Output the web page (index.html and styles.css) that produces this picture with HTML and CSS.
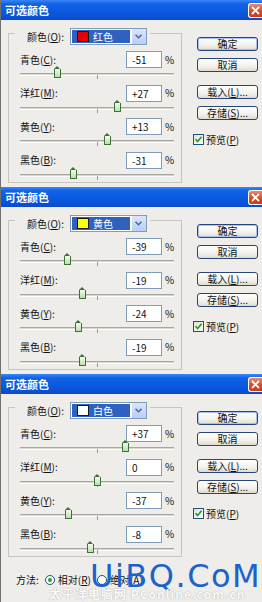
FILE: index.html
```html
<!DOCTYPE html>
<html><head><meta charset="utf-8"><title>可选颜色</title><link rel="stylesheet" href="styles.css"></head>
<body>

<div class="dialog">
  <div class="titlebar"><span class="title">可选颜色</span><span class="close"><svg width="9" height="9" viewBox="0 0 9 9"><path d="M1 1L8 8M8 1L1 8" stroke="#fff" stroke-width="1.8"/></svg></span></div>
  <div class="body">
    <div class="main">
      <div class="group">
        <div class="ghead"><span class="glabel">颜色(<u>O</u>):</span><span class="combo"><span class="sel"><span class="swatch sw-red"></span>红色</span><span class="drop"><svg width="7" height="5" viewBox="0 0 7 5"><path d="M0.5 0.8L3.5 3.8L6.5 0.8" fill="none" stroke="#4d61a8" stroke-width="1.5"/></svg></span></span></div>
        <div class="rows">
          <div class="row"><div class="line"><span class="lbl">青色(<u>C</u>):</span><span class="inp">-51</span><span class="pct">%</span></div><div class="slider"><span class="tick"></span><span class="thumb" style="left:37.7px"></span></div></div>
          <div class="row"><div class="line"><span class="lbl">洋红(<u>M</u>):</span><span class="inp">+27</span><span class="pct">%</span></div><div class="slider"><span class="tick"></span><span class="thumb" style="left:97.8px"></span></div></div>
          <div class="row"><div class="line"><span class="lbl">黄色(<u>Y</u>):</span><span class="inp">+13</span><span class="pct">%</span></div><div class="slider"><span class="tick"></span><span class="thumb" style="left:87px"></span></div></div>
          <div class="row"><div class="line"><span class="lbl">黑色(<u>B</u>):</span><span class="inp">-31</span><span class="pct">%</span></div><div class="slider"><span class="tick"></span><span class="thumb" style="left:53.1px"></span></div></div>
        </div>
      </div>
    </div>
    <div class="side">
      <span class="btn default">确定</span>
      <span class="btn">取消</span>
      <span class="btn gap">载入(<u>L</u>)...</span>
      <span class="btn">存储(<u>S</u>)...</span>
      <span class="check"><span class="cbox"><svg width="9" height="9" viewBox="0 0 9 9"><path d="M1.5 4.2L3.6 6.5L7.6 1.8" fill="none" stroke="#21a121" stroke-width="1.7"/></svg></span>预览(<u>P</u>)</span>
    </div>
  </div>
</div>

<div class="dialog">
  <div class="titlebar"><span class="title">可选颜色</span><span class="close"><svg width="9" height="9" viewBox="0 0 9 9"><path d="M1 1L8 8M8 1L1 8" stroke="#fff" stroke-width="1.8"/></svg></span></div>
  <div class="body">
    <div class="main">
      <div class="group">
        <div class="ghead"><span class="glabel">颜色(<u>O</u>):</span><span class="combo"><span class="sel"><span class="swatch sw-yellow"></span>黄色</span><span class="drop"><svg width="7" height="5" viewBox="0 0 7 5"><path d="M0.5 0.8L3.5 3.8L6.5 0.8" fill="none" stroke="#4d61a8" stroke-width="1.5"/></svg></span></span></div>
        <div class="rows">
          <div class="row"><div class="line"><span class="lbl">青色(<u>C</u>):</span><span class="inp">-39</span><span class="pct">%</span></div><div class="slider"><span class="tick"></span><span class="thumb" style="left:47px"></span></div></div>
          <div class="row"><div class="line"><span class="lbl">洋红(<u>M</u>):</span><span class="inp">-19</span><span class="pct">%</span></div><div class="slider"><span class="tick"></span><span class="thumb" style="left:62.4px"></span></div></div>
          <div class="row"><div class="line"><span class="lbl">黄色(<u>Y</u>):</span><span class="inp">-24</span><span class="pct">%</span></div><div class="slider"><span class="tick"></span><span class="thumb" style="left:58.5px"></span></div></div>
          <div class="row"><div class="line"><span class="lbl">黑色(<u>B</u>):</span><span class="inp">-19</span><span class="pct">%</span></div><div class="slider"><span class="tick"></span><span class="thumb" style="left:62.4px"></span></div></div>
        </div>
      </div>
    </div>
    <div class="side">
      <span class="btn default">确定</span>
      <span class="btn">取消</span>
      <span class="btn gap">载入(<u>L</u>)...</span>
      <span class="btn">存储(<u>S</u>)...</span>
      <span class="check"><span class="cbox"><svg width="9" height="9" viewBox="0 0 9 9"><path d="M1.5 4.2L3.6 6.5L7.6 1.8" fill="none" stroke="#21a121" stroke-width="1.7"/></svg></span>预览(<u>P</u>)</span>
    </div>
  </div>
</div>

<div class="dialog d3">
  <div class="titlebar"><span class="title">可选颜色</span><span class="close"><svg width="9" height="9" viewBox="0 0 9 9"><path d="M1 1L8 8M8 1L1 8" stroke="#fff" stroke-width="1.8"/></svg></span></div>
  <div class="body">
    <div class="main">
      <div class="group">
        <div class="ghead"><span class="glabel">颜色(<u>O</u>):</span><span class="combo"><span class="sel"><span class="swatch sw-white"></span>白色</span><span class="drop"><svg width="7" height="5" viewBox="0 0 7 5"><path d="M0.5 0.8L3.5 3.8L6.5 0.8" fill="none" stroke="#4d61a8" stroke-width="1.5"/></svg></span></span></div>
        <div class="rows">
          <div class="row"><div class="line"><span class="lbl">青色(<u>C</u>):</span><span class="inp">+37</span><span class="pct">%</span></div><div class="slider"><span class="tick"></span><span class="thumb" style="left:105.5px"></span></div></div>
          <div class="row"><div class="line"><span class="lbl">洋红(<u>M</u>):</span><span class="inp">0</span><span class="pct">%</span></div><div class="slider"><span class="tick"></span><span class="thumb" style="left:77px"></span></div></div>
          <div class="row"><div class="line"><span class="lbl">黄色(<u>Y</u>):</span><span class="inp">-37</span><span class="pct">%</span></div><div class="slider"><span class="tick"></span><span class="thumb" style="left:48.5px"></span></div></div>
          <div class="row"><div class="line"><span class="lbl">黑色(<u>B</u>):</span><span class="inp">-8</span><span class="pct">%</span></div><div class="slider"><span class="tick"></span><span class="thumb" style="left:70.8px"></span></div></div>
        </div>
      </div>
      <div class="method">方法:<span class="radio on"></span>相对(<u>R</u>)<span class="radio"></span>绝对(<u>A</u>)</div>
    </div>
    <div class="side">
      <span class="btn default">确定</span>
      <span class="btn">取消</span>
      <span class="btn gap">载入(<u>L</u>)...</span>
      <span class="btn">存储(<u>S</u>)...</span>
      <span class="check"><span class="cbox"><svg width="9" height="9" viewBox="0 0 9 9"><path d="M1.5 4.2L3.6 6.5L7.6 1.8" fill="none" stroke="#21a121" stroke-width="1.7"/></svg></span>预览(<u>P</u>)</span>
    </div>
  </div>
  <div class="watermark">UiBQ.CoM</div>
  <div class="watermark2">太平洋电脑网 PConline.com.cn</div>
</div>

</body></html>
```

FILE: styles.css
```css
* { box-sizing: border-box; margin: 0; padding: 0; }
body {
  margin: 0;
  width: 262px;
  height: 602px;
  overflow: hidden;
  background: #eeede9;
  font-family: "Noto Sans CJK SC", "Liberation Sans", sans-serif;
  font-size: 10px;
  line-height: 1;
  color: #111;
}
u { text-decoration: underline; text-underline-offset: 1px; }

.dialog {
  position: relative;
  height: 187px;
  display: flex;
  flex-direction: column;
  border-left: 1px solid #707070;
  background: #eeede9;
  overflow: hidden;
}
.d3 { height: 228px; }

.titlebar {
  flex: none;
  height: 20px;
  display: flex;
  align-items: center;
  justify-content: space-between;
  padding-left: 4px;
  background: linear-gradient(#3a86f5 0%, #1062e6 20%, #0a56dc 70%, #0a4bc8 100%);
}
.title {
  color: #fff;
  font-weight: bold;
  font-size: 11px;
}
.close {
  width: 14px;
  height: 15px;
  margin-top: 1px;
  display: flex;
  align-items: center;
  justify-content: center;
  border: 1px solid #fff;
  border-right: none;
  border-radius: 3px 0 0 3px;
  background: linear-gradient(#ec8a6c, #d9461e 60%, #c83c16);
}

.body {
  flex: 1;
  display: flex;
  align-items: flex-start;
  padding-left: 7px;
}
.main { padding-top: 13px; }

.group {
  width: 174px;
  height: 150px;
  border: 1px solid #c6c5bf;
}
.ghead {
  display: flex;
  align-items: center;
  width: max-content;
  height: 17px;
  margin: -6px 0 0 6px;
  padding: 0 3px 0 12px;
  background: #eeede9;
}
.glabel { margin-right: 6px; }
.combo {
  display: flex;
  width: 77px;
  height: 17px;
  border: 1px solid #7f9db9;
  background: #fff;
}
.sel {
  flex: 1;
  display: flex;
  align-items: center;
  gap: 4px;
  margin: 1px;
  padding-left: 5px;
  background: #2f62c0;
  color: #fff;
}
.swatch {
  width: 12px;
  height: 11px;
  border: 1px solid #1a1a1a;
}
.sw-red { background: #e20000; }
.sw-yellow { background: #ffff00; }
.sw-white { background: #ffffff; }
.drop {
  width: 15px;
  display: flex;
  align-items: center;
  justify-content: center;
  background: linear-gradient(#dbe5fb, #b9cdf7);
  border-left: 1px solid #fff;
}

.rows { margin-top: 6px; }
.row { height: 33.5px; }
.line {
  display: flex;
  align-items: center;
  height: 17px;
  padding: 0 4px 0 11px;
}
.lbl { flex: 1; }
.inp {
  width: 36px;
  height: 17px;
  padding-left: 5px;
  line-height: 15px;
  border: 1px solid #7f9db9;
  background: #fff;
}
.pct { width: 12px; margin-left: 3px; }

.slider {
  position: relative;
  width: 154px;
  height: 3px;
  margin: 5px 0 0 11px;
  border-top: 1px solid #a7a6a0;
  border-bottom: 1px solid #ffffff;
  background: #d8d7d0;
}
.tick {
  position: absolute;
  left: 77px;
  top: 1px;
  width: 1px;
  height: 4px;
  background: #9a9993;
}
.thumb {
  position: absolute;
  top: -5px;
  width: 7px;
  height: 9px;
  margin-left: -3.5px;
  background: linear-gradient(#f4fbef, #b8e0a8);
  border: 1px solid #3e6f37;
  border-top: none;
  border-radius: 0 0 1px 1px;
}
.thumb::before {
  content: "";
  position: absolute;
  left: -1px;
  top: -3px;
  width: 0;
  height: 0;
  border-left: 3.5px solid transparent;
  border-right: 3.5px solid transparent;
  border-bottom: 3px solid #3e6f37;
}

.side {
  display: flex;
  flex-direction: column;
  align-items: flex-start;
  margin-left: 15px;
  padding-top: 17px;
}
.btn {
  display: flex;
  align-items: center;
  justify-content: center;
  width: 61px;
  height: 14px;
  margin-bottom: 7px;
  border: 1px solid #27457a;
  border-radius: 3px;
  background: linear-gradient(#ffffff, #f2f1ec 60%, #dedbd0);
  font-size: 10px;
}
.btn.default { box-shadow: inset 0 0 0 1px #a9c1f0; }
.btn.gap { margin-top: 6px; }
.check {
  display: flex;
  align-items: center;
  margin-top: 7px;
  margin-left: -4px;
}
.cbox {
  width: 11px;
  height: 11px;
  margin-right: 2px;
  display: flex;
  align-items: center;
  justify-content: center;
  border: 1px solid #1c5180;
  background: linear-gradient(135deg, #e2e1da, #ffffff);
}

.method {
  display: flex;
  align-items: center;
  height: 14px;
  margin: 16px 0 0 8px;
}
.radio {
  width: 10px;
  height: 10px;
  margin: 0 3px 0 6px;
  border: 1px solid #1c5180;
  border-radius: 50%;
  background: #fff;
  position: relative;
}
.radio.on::after {
  content: "";
  position: absolute;
  left: 2px;
  top: 2px;
  width: 4px;
  height: 4px;
  border-radius: 50%;
  background: #28a428;
}

.watermark {
  position: absolute;
  left: 89px;
  top: 186px;
  font-family: "DejaVu Sans", sans-serif;
  font-size: 32px;
  letter-spacing: 1.5px;
  line-height: 1;
  color: #1c62cc;
}
.watermark2 {
  position: absolute;
  left: 48px;
  top: 214px;
  font-size: 12px;
  font-weight: bold;
  letter-spacing: 1px;
  line-height: 1;
  color: #fbfbfb;
  text-shadow: 0 0 1px #b4b4b4, 0 0 1px #b4b4b4;
  white-space: nowrap;
}
```
